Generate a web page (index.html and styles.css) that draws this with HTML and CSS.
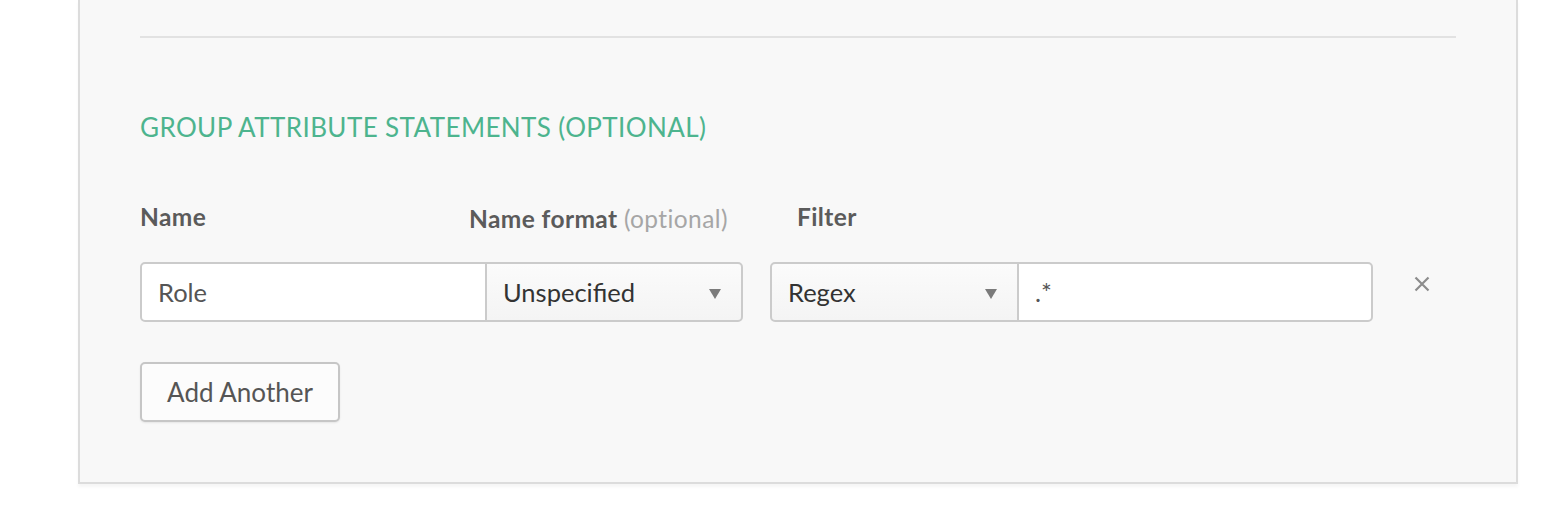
FILE: index.html
```html
<!DOCTYPE html>
<html>
<head>
<meta charset="utf-8">
<link rel="stylesheet" href="styles.css">
</head>
<body>
<div class="panel">
  <div class="divider"></div>
  <h2 class="section-title">GROUP ATTRIBUTE STATEMENTS (OPTIONAL)</h2>
  <div class="labels">
    <div class="label label-name">Name</div>
    <div class="label label-format">Name format <span class="optional">(optional)</span></div>
    <div class="label label-filter">Filter</div>
  </div>
  <div class="row">
    <div class="group">
      <div class="input input-name">Role</div>
      <div class="select select-format">Unspecified<span class="arrow"></span></div>
    </div>
    <div class="group group-filter">
      <div class="select select-filter">Regex<span class="arrow"></span></div>
      <div class="input input-filter">.*</div>
    </div>
    <div class="remove">
      <svg width="16" height="16" viewBox="0 0 16 16"><path d="M1.5 1.5 L14.5 14.5 M14.5 1.5 L1.5 14.5" stroke="#8c8c8c" stroke-width="2.2" fill="none"/></svg>
    </div>
  </div>
  <button class="btn">Add Another</button>
</div>
</body>
</html>
```
FILE: styles.css
```css
* { box-sizing: border-box; }
html, body { margin: 0; padding: 0; background: #fff; }
body { font-family: Lato, "Open Sans", sans-serif; width: 1568px; height: 514px; overflow: hidden; }

.panel {
  margin-left: 78px;
  width: 1440px;
  background: #f8f8f8;
  border: 2px solid #dcdcdc;
  border-top: none;
  box-shadow: 0 3px 3px rgba(0,0,0,0.04);
  padding: 36px 60px 60px 60px;
}
.divider { height: 2px; background: #e2e2e2; }
.section-title {
  margin: 0;
  padding-top: 73px;
  font-size: 26px;
  line-height: 32px;
  font-weight: 400;
  color: #4db48e;
  letter-spacing: 0.4px;
}
.labels {
  display: flex;
  margin-top: 56px;
  height: 32px;
  align-items: flex-end;
}
.label { font-size: 24.5px; font-weight: 700; color: #5b5b5b; line-height: 28px; letter-spacing: 0.4px; }
.label-name { width: 329px; }
.label-format { width: 328px; position: relative; top: 2px; }
.optional { font-weight: 400; color: #a6a6a6; }

.row { display: flex; align-items: flex-start; height: 60px; margin-top: 31px; }
.group { display: flex; width: 603px; height: 60px; }
.group-filter { margin-left: 27px; }
.input, .select {
  height: 60px;
  border: 2px solid #cbcbcb;
  font-size: 25.5px;
  line-height: 56px;
  padding-left: 16px;
}
.input { background: #fff; color: #555; }
.select { background: linear-gradient(#fbfbfb, #f4f4f4); color: #333; position: relative; }
.input-name { width: 346px; border-radius: 5px 0 0 5px; border-right-width: 1px; }
.select-format { flex: 1; border-radius: 0 5px 5px 0; border-left-width: 1px; }
.select-filter { width: 248px; border-radius: 5px 0 0 5px; border-right-width: 1px; }
.input-filter { flex: 1; border-radius: 0 5px 5px 0; border-left-width: 1px; }
.arrow {
  position: absolute;
  right: 20px;
  top: 25px;
  width: 0; height: 0;
  border-left: 6px solid transparent;
  border-right: 6px solid transparent;
  border-top: 10px solid #7b7b7b;
}
.remove { margin-left: 41px; padding-top: 14px; }
.remove svg { display: block; }

.btn {
  display: block;
  margin-top: 40px;
  width: 200px;
  height: 60px;
  background: #fcfcfc;
  border: 2px solid #c6c6c6;
  border-radius: 5px;
  box-shadow: 0 1px 2px rgba(0,0,0,0.08);
  font-family: Lato, "Open Sans", sans-serif;
  font-size: 26px;
  color: #555;
  padding: 0;
}
```
